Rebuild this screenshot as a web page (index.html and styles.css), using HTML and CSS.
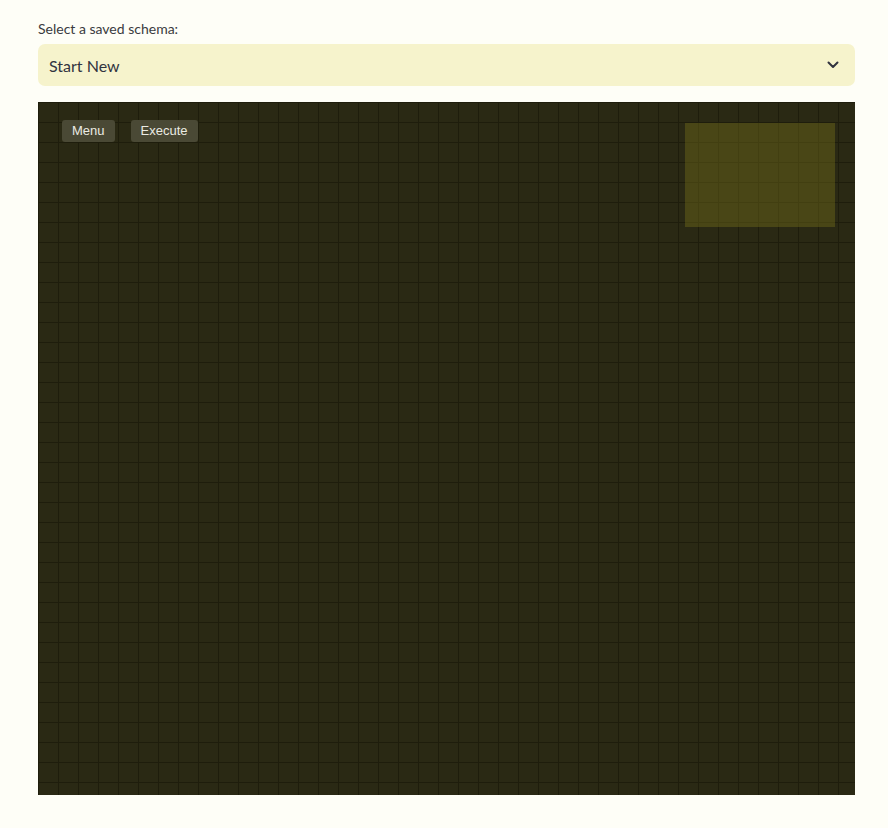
FILE: index.html
```html
<!DOCTYPE html>
<html>
<head>
<meta charset="utf-8">
<link rel="stylesheet" href="styles.css">
</head>
<body>
<div class="page">
  <label class="label">Select a saved schema:</label>
  <div class="select">
    <span class="value">Start New</span>
    <svg class="chev" width="12" height="8" viewBox="0 0 12 8"><path d="M1.5 1.5 L6 6 L10.5 1.5" fill="none" stroke="#31333f" stroke-width="2" stroke-linecap="round" stroke-linejoin="round"/></svg>
  </div>
  <div class="canvas">
    <div class="toolbar">
      <button class="btn">Menu</button>
      <button class="btn">Execute</button>
    </div>
    <div class="minimap"></div>
  </div>
</div>
</body>
</html>
```
FILE: styles.css
```css
html, body {
  margin: 0;
  padding: 0;
  background: #fefef7;
}
.page {
  padding: 20px 33px 0 38px;
  display: flex;
  flex-direction: column;
  width: 817px;
}
.label {
  font-family: Lato, "Noto Sans", sans-serif;
  font-size: 14px;
  color: #3a3b40;
  line-height: 18px;
  height: 18px;
  margin-bottom: 6px;
}
.select {
  height: 42px;
  background: #f6f3cc;
  border-radius: 7px;
  display: flex;
  align-items: center;
  justify-content: space-between;
  padding: 0 16px 0 11px;
  box-sizing: border-box;
}
.value {
  font-family: Lato, "Noto Sans", sans-serif;
  font-size: 16px;
  color: #31333f;
}
.chev { display: block; }
.canvas {
  margin-top: 16px;
  height: 693px;
  position: relative;
  background-color: #2a2914;
  background-image:
    repeating-linear-gradient(to right, #1e1d0c 0, #1e1d0c 1px, transparent 1px, transparent 20px),
    repeating-linear-gradient(to bottom, #1e1d0c 0, #1e1d0c 1px, transparent 1px, transparent 20px);
}
.toolbar {
  display: flex;
  gap: 16px;
  padding: 18px 0 0 24px;
}
.btn {
  font-family: "Liberation Sans", Arial, sans-serif;
  font-size: 13px;
  color: #ebebe3;
  background: #4a4935;
  border: none;
  border-radius: 3px;
  height: 22px;
  padding: 0 10px;
  line-height: 22px;
}
.minimap {
  position: absolute;
  left: 647px;
  top: 21px;
  width: 150px;
  height: 104px;
  background: rgba(110, 106, 25, 0.45);
}
```
